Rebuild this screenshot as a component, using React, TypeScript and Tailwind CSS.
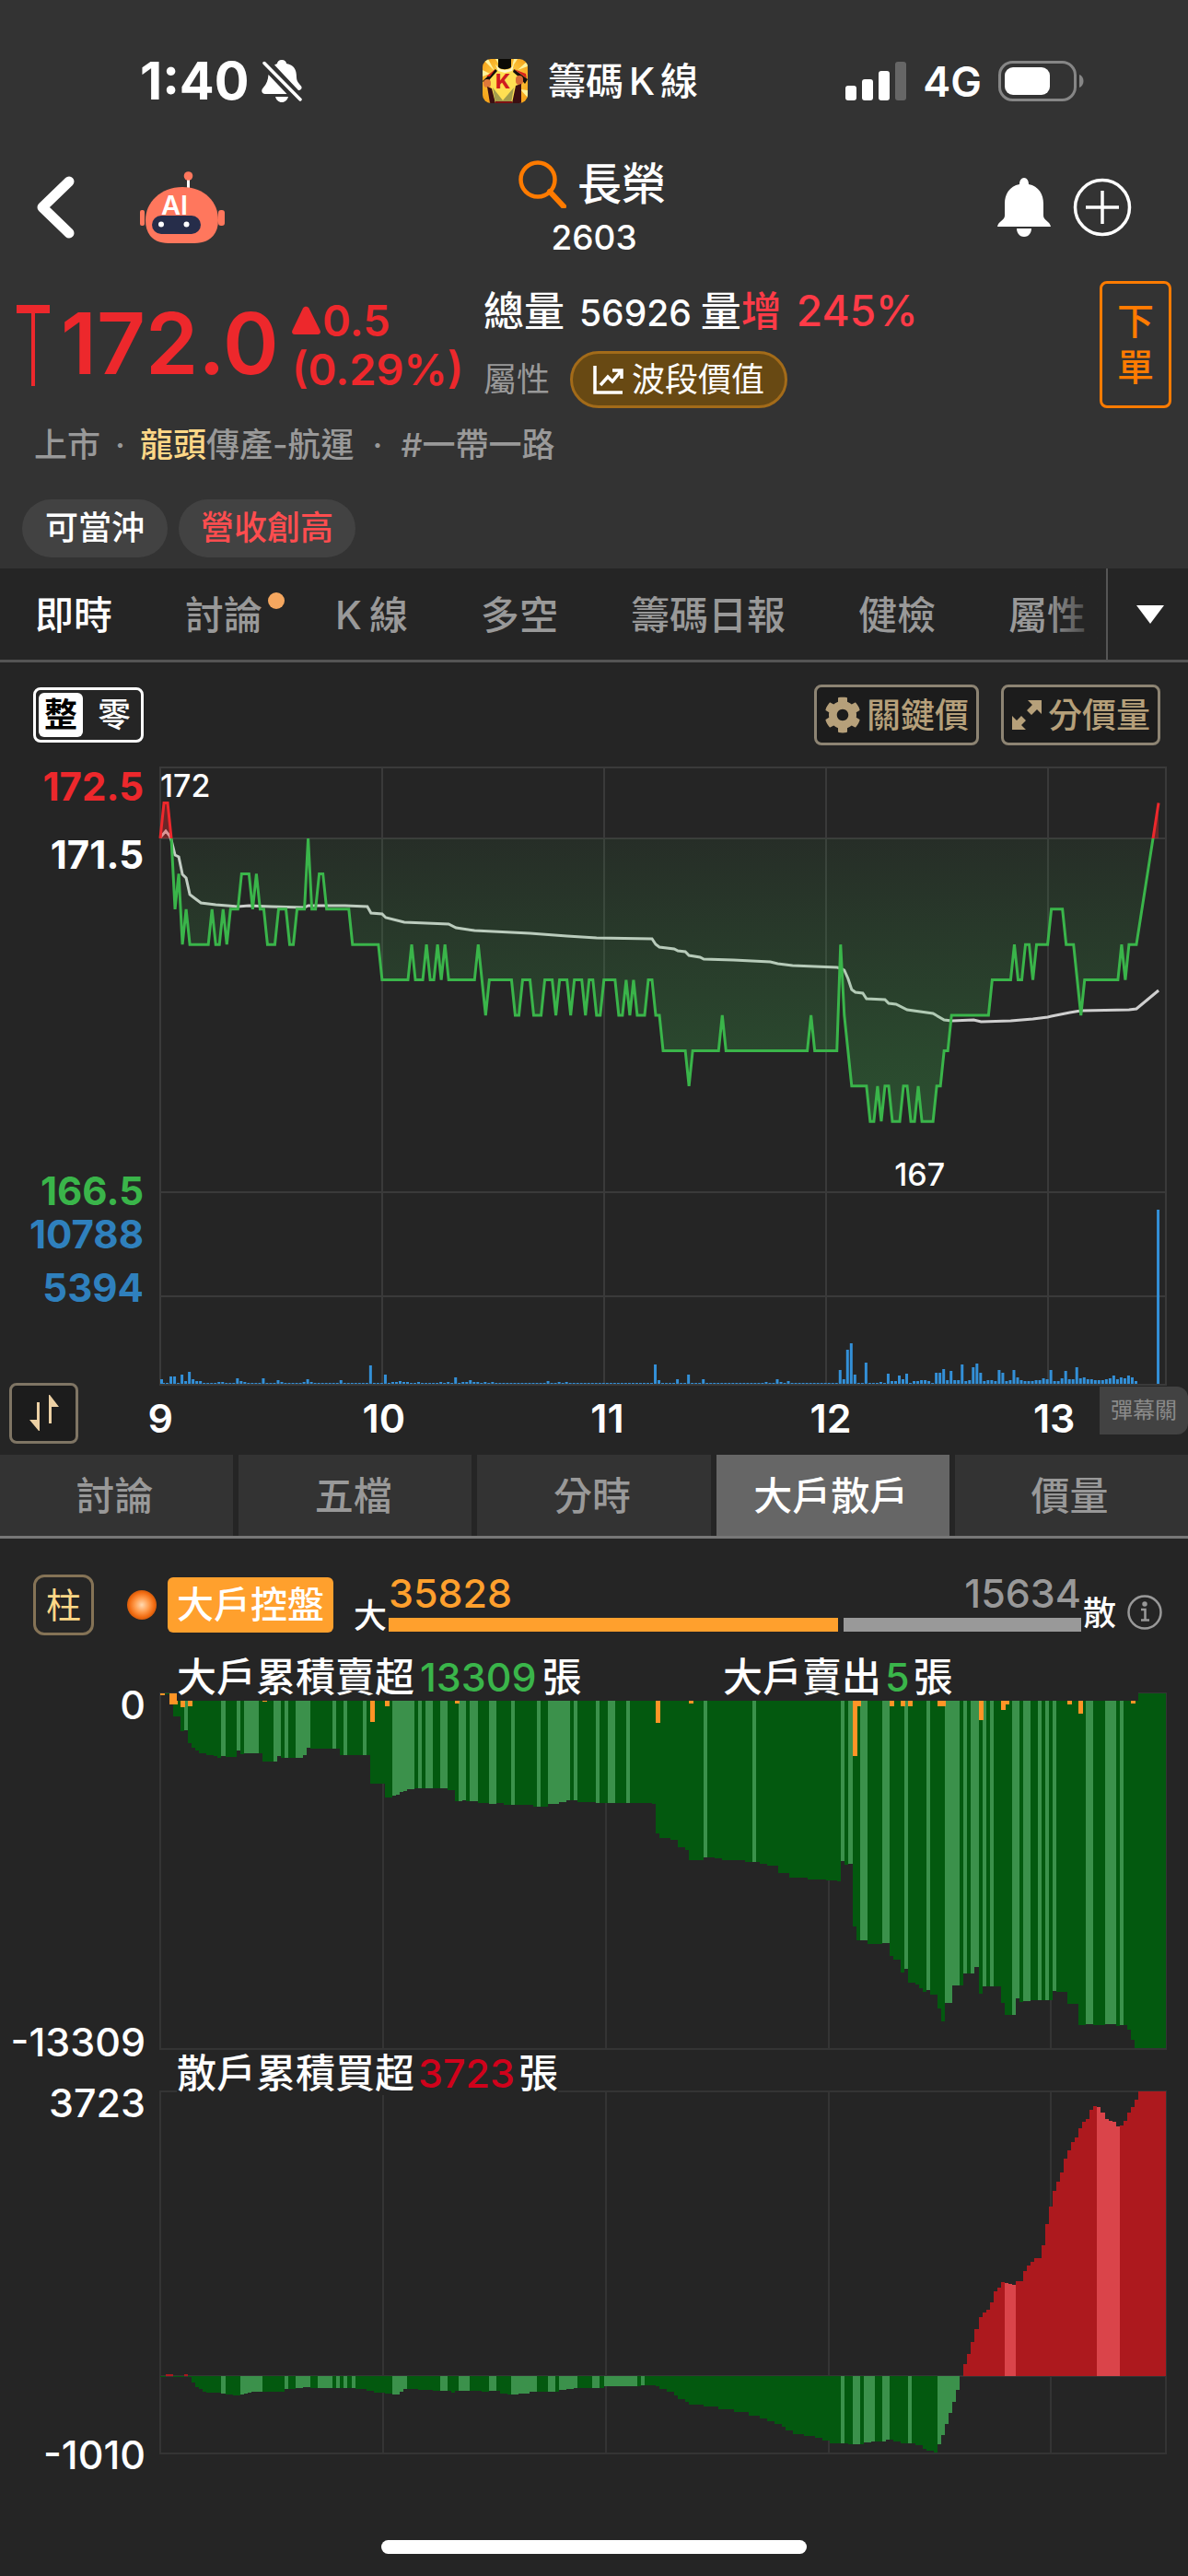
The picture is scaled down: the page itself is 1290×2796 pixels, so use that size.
import clsx from "clsx";
import { FaCog } from "react-icons/fa";

type Point = [number, number];

const FONT = "font-[Inter,'Noto_Sans_CJK_TC','Noto_Sans',sans-serif]";

/* ---------- intraday data: [minute, value] ---------- */

// price in half-dollar ticks below the 171.5 reference
const PRICE: Point[] = [
  [0, 0], [1, -1], [2, -1], [3, 0], [4, 2], [5, 1], [6, 3], [7, 2], [8, 3], [13, 3], [14, 2], [15, 3], [16, 3],
  [17, 2], [18, 3], [19, 2], [21, 2], [22, 1], [24, 1], [25, 2], [26, 1], [27, 2], [28, 2], [29, 3], [31, 3],
  [32, 2], [34, 2], [35, 3], [36, 3], [37, 2], [39, 2], [40, 0], [41, 2], [42, 2], [43, 1], [44, 1], [45, 2],
  [51, 2], [52, 3], [59, 3], [60, 4], [67, 4], [68, 3], [69, 4], [71, 4], [72, 3], [73, 4], [74, 4], [75, 3],
  [76, 4], [77, 3], [78, 4], [85, 4], [86, 3], [88, 5], [89, 4], [95, 4], [96, 5], [97, 5], [98, 4], [100, 4],
  [101, 5], [103, 5], [104, 4], [106, 4], [107, 5], [108, 4], [110, 4], [111, 5], [112, 4], [114, 4], [115, 5],
  [116, 4], [117, 4], [118, 5], [119, 5], [120, 4], [123, 4], [124, 5], [125, 5], [126, 4], [127, 5], [128, 4],
  [129, 5], [131, 5], [132, 4], [133, 4], [134, 5], [135, 5], [136, 6], [142, 6], [143, 7], [144, 6], [151, 6],
  [152, 5], [153, 6], [175, 6], [176, 5], [177, 6], [183, 6], [184, 3], [185, 5], [187, 7], [191, 7], [192, 8],
  [193, 8], [194, 7], [195, 8], [196, 7], [197, 7], [198, 8], [200, 8], [201, 7], [202, 7], [203, 8], [204, 8],
  [205, 7], [206, 8], [209, 8], [210, 7], [211, 7], [212, 6], [213, 6], [214, 5], [224, 5], [225, 4], [230, 4],
  [231, 3], [232, 4], [233, 4], [234, 3], [235, 3], [236, 4], [237, 3], [240, 3], [241, 2], [244, 2], [245, 3],
  [247, 3], [249, 5], [250, 4], [259, 4], [260, 3], [261, 4], [262, 3], [264, 3], [270, -1],
];

const AVERAGE: Point[] = [
  [0, 76], [1.5, 69], [2.5, 74], [3, 79], [4, 95], [5, 97], [6, 116], [7, 120], [8, 138], [9, 141], [11, 147],
  [15, 149], [21, 151], [24, 150], [30, 151], [39, 152], [40, 150], [50, 150], [56, 151], [57, 158], [60, 159],
  [61, 163], [66, 168], [78, 170], [80, 174], [85, 177], [100, 180], [110, 183], [118, 185], [133, 186],
  [134, 192], [135, 195], [139, 197], [140, 199], [142, 200], [143, 204], [146, 206], [147, 208], [155, 209],
  [165, 211], [167, 213], [171, 215], [183, 217], [184, 218], [185, 220], [186, 229], [187, 241], [188, 244],
  [190, 245], [191, 251], [196, 252], [197, 256], [199, 257], [202, 263], [209, 267], [212, 274], [214, 275],
  [220, 274], [222, 276], [230, 275], [236, 273], [240, 271], [241, 270], [246, 266], [249, 264], [262, 263],
  [264, 262], [270, 242],
];

const VOLUME: Point[] = [
  [0, 5], [3, 8], [4, 8], [6, 10], [7, 3], [8, 13], [9, 5], [10, 3], [11, 3], [16, 2], [17, 2], [21, 6], [22, 3],
  [23, 2], [28, 6], [32, 4], [33, 2], [39, 2], [40, 5], [41, 2], [49, 4], [57, 20], [61, 10], [63, 2], [64, 2],
  [65, 3], [66, 2], [67, 2], [70, 2], [76, 2], [78, 2], [80, 7], [82, 2], [83, 2], [84, 4], [85, 2], [86, 2],
  [88, 2], [90, 2], [105, 3], [108, 2], [110, 2], [134, 21], [135, 4], [140, 5], [143, 10], [147, 5], [164, 2],
  [167, 5], [168, 2], [170, 3], [184, 15], [185, 5], [186, 37], [187, 44], [188, 10], [191, 23], [195, 2],
  [197, 11], [198, 3], [199, 3], [200, 9], [201, 5], [202, 11], [204, 3], [205, 3], [206, 4], [207, 4], [208, 3],
  [210, 12], [211, 12], [212, 16], [213, 4], [214, 14], [215, 4], [216, 4], [217, 21], [218, 3], [219, 4],
  [220, 18], [221, 22], [222, 12], [223, 3], [224, 4], [225, 4], [226, 3], [227, 15], [228, 12], [229, 3],
  [230, 4], [231, 15], [232, 7], [233, 4], [234, 3], [235, 3], [236, 3], [237, 4], [238, 4], [239, 6], [240, 5],
  [241, 15], [242, 3], [243, 3], [244, 6], [245, 14], [246, 5], [247, 5], [248, 18], [249, 6], [250, 7],
  [251, 5], [252, 5], [253, 4], [254, 4], [255, 4], [256, 5], [257, 6], [258, 9], [259, 5], [260, 7], [261, 6],
  [262, 9], [263, 7], [264, 3], [270, 189],
];

// a value holds until the next entry
const BIG: Point[] = [
  [0, 1], [4, 25], [6, 41], [7, 40], [8, 54], [9, 59], [10, 62], [11, 65], [13, 67], [15, 68], [16, 70], [17, 68],
  [18, 69], [21, 62], [22, 66], [23, 65], [28, 74], [32, 68], [33, 70], [39, 67], [40, 59], [41, 60], [49, 67],
  [57, 98], [61, 113], [63, 111], [64, 110], [65, 107], [66, 106], [67, 104], [69, 103], [78, 105], [80, 117],
  [82, 116], [83, 117], [86, 119], [89, 120], [91, 119], [93, 121], [101, 123], [105, 120], [108, 118],
  [110, 116], [113, 118], [118, 119], [133, 120], [134, 152], [135, 157], [138, 159], [140, 167], [142, 170],
  [143, 181], [147, 178], [150, 179], [152, 181], [158, 183], [162, 185], [164, 187], [167, 195], [170, 200],
  [175, 202], [180, 203], [183, 204], [184, 182], [185, 186], [186, 185], [187, 253], [188, 268], [191, 272],
  [195, 271], [197, 285], [198, 289], [200, 303], [201, 299], [202, 314], [204, 316], [205, 320], [206, 324],
  [207, 322], [208, 327], [210, 342], [211, 356], [212, 336], [214, 317], [217, 304], [220, 297], [221, 326],
  [222, 318], [227, 336], [228, 349], [231, 331], [232, 335], [233, 334], [235, 333], [241, 323], [242, 324],
  [245, 337], [248, 360], [250, 359], [252, 360], [255, 359], [258, 361], [259, 360], [261, 365], [262, 376],
  [263, 385],
];

const BIG_LIGHT: Point[] = [
  [7, 7], [17, 17], [21, 21], [23, 26], [31, 32], [34, 34], [37, 40], [47, 47], [50, 50], [55, 55], [63, 68],
  [70, 70], [72, 73], [76, 77], [81, 82], [84, 85], [89, 90], [95, 95], [102, 102], [105, 110], [112, 112],
  [118, 118], [121, 122], [126, 126], [147, 147], [160, 160], [184, 184], [186, 186], [189, 190], [195, 196],
  [201, 201], [207, 207], [212, 215], [217, 217], [219, 220], [222, 222], [224, 224], [230, 231], [233, 234],
  [237, 237], [239, 239], [241, 241], [250, 251], [255, 257], [259, 259],
];

const BIG_TRADES: Point[] = [
  [0, 2], [3, 12], [4, 12], [6, 15], [8, 14], [28, 9], [57, 31], [61, 14], [80, 11], [134, 32], [143, 11],
  [187, 68], [188, 14], [197, 14], [200, 14], [202, 14], [210, 14], [211, 14], [221, 29], [227, 18], [228, 12],
  [245, 12], [248, 22], [262, 11],
];

// negative = net buy, drawn above the zero line
const SMALL: Point[] = [
  [0, 1], [2, -2], [4, 1], [7, -2], [8, 1], [9, 7], [10, 12], [11, 14], [12, 17], [13, 18], [17, 19], [18, 20],
  [20, 21], [22, 20], [23, 19], [24, 18], [25, 17], [34, 14], [37, 13], [39, 12], [41, 13], [53, 14], [56, 16],
  [58, 18], [61, 19], [63, 20], [65, 17], [66, 14], [70, 15], [74, 16], [79, 18], [80, 16], [87, 17], [89, 16],
  [92, 19], [94, 20], [97, 19], [100, 17], [108, 15], [110, 14], [112, 13], [120, 11], [130, 10], [134, 11],
  [135, 14], [137, 17], [139, 21], [140, 25], [142, 28], [143, 31], [147, 33], [151, 36], [155, 39], [159, 43],
  [162, 46], [164, 49], [166, 52], [168, 55], [169, 59], [171, 63], [174, 65], [177, 67], [179, 70], [181, 73],
  [186, 74], [190, 72], [192, 71], [196, 69], [198, 71], [200, 73], [204, 75], [206, 79], [207, 81], [209, 83],
  [210, 74], [211, 64], [212, 52], [213, 40], [214, 28], [215, 15], [216, 0], [217, -13], [218, -24],
  [219, -37], [220, -51], [221, -64], [222, -69], [223, -72], [224, -80], [225, -92], [226, -96], [227, -102],
  [228, -101], [229, -100], [230, -99], [231, -103], [233, -114], [234, -120], [235, -124], [236, -128],
  [238, -142], [239, -165], [240, -184], [241, -201], [242, -211], [243, -221], [244, -236], [245, -245],
  [246, -254], [247, -259], [248, -269], [249, -276], [250, -279], [251, -289], [252, -293], [253, -292],
  [254, -286], [255, -279], [256, -277], [257, -276], [258, -271], [259, -272], [260, -277], [261, -286],
  [262, -292], [263, -300], [264, -309],
];

const SMALL_LIGHT: Point[] = [
  [17, 17], [22, 27], [34, 34], [37, 40], [43, 46], [48, 48], [50, 50], [52, 52], [63, 66], [76, 77], [81, 83],
  [89, 90], [95, 101], [105, 106], [108, 112], [117, 118], [120, 128], [130, 130], [184, 184], [187, 188],
  [190, 192], [195, 196], [202, 202], [210, 215], [228, 230], [253, 258],
];

const BARS = 272;
const STEP = 1092 / 271;

function expand(points: Point[]) {
  const out: number[] = [];
  let k = 0;
  for (let i = 0; i < BARS; i++) {
    while (k + 1 < points.length && points[k + 1][0] <= i) k++;
    out.push(points[k][1]);
  }
  return out;
}

const inRanges = (ranges: Point[], i: number) => ranges.some(([a, b]) => i >= a && i <= b);

function barX(i: number) {
  const x1 = Math.max(0, (i - 0.5) * STEP);
  const x2 = Math.min(1092, (i + 0.5) * STEP);
  return { x: x1, width: x2 - x1 };
}

/* ---------- charts ---------- */

function PriceChart() {
  const x = (m: number) => m * 4.015;
  const line = PRICE.map(([m, v]) => `${x(m)},${77 + v * 38.4}`).join(" ");
  const area = `0,77 ${line} ${x(270)},77`;
  const volume = new Map(VOLUME);
  return (
    <svg className="block h-[671px] w-full overflow-visible" viewBox="0 0 1092 671" preserveAspectRatio="none">
      <defs>
        <linearGradient id="down" x1="0" y1="77" x2="0" y2="385" gradientUnits="userSpaceOnUse">
          <stop offset="0" stopColor="#3ab54a" stopOpacity="0.06" />
          <stop offset="1" stopColor="#3ab54a" stopOpacity="0.3" />
        </linearGradient>
        <clipPath id="above">
          <rect x="-4" y="0" width="1100" height="77" />
        </clipPath>
        <clipPath id="below">
          <rect x="-4" y="77" width="1100" height="400" />
        </clipPath>
      </defs>
      <g stroke="#3a3a3a" strokeWidth="2" fill="none">
        <path d="M0 0H1092V670H0Z" />
        <path d="M0 77H1092M0 461H1092M0 574H1092" />
        <path d="M241 0V670M482 0V670M723 0V670M964 0V670" />
      </g>
      <polyline points={AVERAGE.map(([m, v]) => `${x(m)},${v}`).join(" ")} fill="none" stroke="#cfcfcf" strokeWidth="3" />
      <g clipPath="url(#below)">
        <polygon points={area} fill="url(#down)" />
        <polyline points={line} fill="none" stroke="#3ab54a" strokeWidth="3" />
      </g>
      <g clipPath="url(#above)">
        <polygon points={area} fill="#ed282c" fillOpacity="0.35" />
        <polyline points={line} fill="none" stroke="#ed282c" strokeWidth="3" />
      </g>
      {Array.from({ length: 271 }, (_, m) => {
        if (m > 264 && m < 270) return null;
        const h = volume.get(m) ?? 1;
        return <rect key={m} x={x(m) - (m ? 2 : 0)} y={669 - h} width="3" height={h} fill="#3390d8" />;
      })}
    </svg>
  );
}

function BigChart() {
  return (
    <svg className="block h-[386px] w-full overflow-visible" viewBox="0 0 1092 386" preserveAspectRatio="none">
      <path d="M0 0H1092V386H0ZM242 0V386M484 0V386M726 0V386M967 0V386" stroke="#343434" strokeWidth="2" fill="none" />
      <g shapeRendering="crispEdges">
        {expand(BIG).map((h, i) => (
          <rect key={i} {...barX(i)} y="0" height={h} fill={inRanges(BIG_LIGHT, i) ? "#3b914b" : "#03590f"} />
        ))}
        {BIG_TRADES.map(([i, h]) => (
          <rect key={i} x={Math.max(0, i * STEP - 2)} y="0" width="5" height={h} fill="#ff9426" />
        ))}
      </g>
    </svg>
  );
}

function SmallChart() {
  return (
    <svg className="block h-[393px] w-full overflow-visible" viewBox="0 0 1092 393" preserveAspectRatio="none">
      <path
        d="M0 0H1092V393H0ZM0 309H1092M242 0V393M484 0V393M726 0V393M967 0V393"
        stroke="#343434"
        strokeWidth="2"
        fill="none"
      />
      <g shapeRendering="crispEdges">
        {expand(SMALL).map((h, i) => {
          const light = inRanges(SMALL_LIGHT, i);
          const fill = h < 0 ? (light ? "#da444a" : "#ad191e") : light ? "#3b914b" : "#03590f";
          return <rect key={i} {...barX(i)} y={h < 0 ? 309 + h : 309} height={Math.abs(h)} fill={fill} />;
        })}
      </g>
    </svg>
  );
}

/* ---------- icons ---------- */

function MutedBell() {
  return (
    <svg width="44" height="46" viewBox="0 0 44 46" fill="#fff">
      <path d="M22 0c-3 0-5 2-5 4-1 .4-2 1-3 1.600L40 33c2 0 4-1.500 3.500-3.500C43 27 38 25 38 19 38 10 35 5.500 27 4c0-2-2-4-5-4Z" />
      <path d="M7.500 16C7 22 5.500 26 2 30c-3 3-2 7 2 7h23.500Z" />
      <path d="M15 40h14c-1 3.500-3.500 6-7 6s-6-2.500-7-6Z" />
      <path d="M3 3.500 42 43" stroke="#fff" strokeWidth="3.500" strokeLinecap="round" />
    </svg>
  );
}

function AppIcon() {
  return (
    <svg width="49" height="48" viewBox="0 0 49 48">
      <defs>
        <clipPath id="app">
          <rect width="49" height="48" rx="9" />
        </clipPath>
        <radialGradient id="glow" cx="50%" cy="45%" r="60%">
          <stop offset="0" stopColor="#ffe45a" />
          <stop offset="1" stopColor="#f7a51c" />
        </radialGradient>
      </defs>
      <g clipPath="url(#app)">
        <rect width="49" height="48" fill="url(#glow)" />
        <path d="M0 0h6l7 13ZM14 0h3l2 8ZM34 0h4l-6 9ZM49 2v6L38 12ZM0 12v7l8-3ZM49 34v8l-8-9Z" fill="#fff29a" />
        <path d="M8 18 16 10 24 14 33 10 42 18 40 40 34 48H14L9 40Z" fill="#ffdf52" />
        <path d="M17 0h14v9c-4 3-10 3-14 0Z" fill="#0b0a06" />
        <path d="M14 6 19 11 24 12 30 11 34 6 32 13 24 15 17 13Z" fill="#fff7c8" />
        <path d="M0 24 14 11 16 13 8 22 4 28ZM49 22 34 11 33 14 41 21 46 27Z" fill="#15100c" />
        <path d="M4 19 14 11 8 19ZM34 11 47 16 48 21Z" fill="#d8251d" />
        <rect x="1" y="22" width="8" height="9" rx="4" fill="#e0793a" />
        <rect x="36" y="18" width="8" height="10" rx="4" fill="#d86b35" />
        <path d="M5 30 10 32 14 48H8ZM42 27 36 29 32 48H42Z" fill="#3b0f12" />
        <path d="M11 31 22 45 34 31 31 48H14Z" fill="#a39d4c" />
        <path d="M14 46h18v2H14Z" fill="#7b1013" />
        <text x="14" y="32" fontSize="22" fontWeight="800" fill="#cf1b1f" fontFamily="Inter, sans-serif">
          K
        </text>
      </g>
    </svg>
  );
}

function Signal() {
  return (
    <svg width="66" height="42" viewBox="0 0 66 42" fill="#fff">
      <rect x="0" y="26" width="12" height="16" rx="3" />
      <rect x="18" y="19" width="12" height="23" rx="3" />
      <rect x="36" y="10" width="12" height="32" rx="3" />
      <rect x="54" y="0" width="12" height="42" rx="3" fill="#666" />
    </svg>
  );
}

function Battery() {
  return (
    <svg width="94" height="44" viewBox="0 0 94 44">
      <rect x="1.500" y="1.500" width="82" height="41" rx="14" fill="none" stroke="#868686" strokeWidth="3" />
      <rect x="7" y="7" width="49" height="30" rx="9" fill="#fff" />
      <path d="M88 15c6 2 6 12 0 14Z" fill="#868686" />
    </svg>
  );
}

function Robot() {
  return (
    <svg width="92" height="78" viewBox="0 0 92 78">
      <path d="M52.500 6v14" stroke="#fff" strokeWidth="3" />
      <circle cx="52.500" cy="5" r="4.800" fill="#ff775d" />
      <rect x="0" y="42" width="5" height="17" rx="2" fill="#ff775d" />
      <rect x="85" y="42" width="7" height="17" rx="3" fill="#ff775d" />
      <path d="M46 17c25 0 39 17 39 36 0 16-10 25-26 25H31C15 78 6 69 6 53 6 34 22 17 46 17Z" fill="#ff775d" />
      <text x="23" y="47" fontSize="29" fontWeight="600" fill="#fff" fontFamily="Inter, sans-serif">
        AI
      </text>
      <rect x="13" y="48" width="53" height="20" rx="10" fill="#262d4a" />
      <circle cx="23" cy="57.500" r="3" fill="#fff" />
      <circle cx="50.500" cy="57.500" r="3" fill="#fff" />
    </svg>
  );
}

function Bell() {
  return (
    <svg width="58" height="64" viewBox="0 0 58 64" fill="#fff">
      <path d="M29 0c-3 0-5 3-5 7C13 9 8 18 8 28v13c0 5-7 6-8 12h58c-1-6-8-7-8-12V28C50 18 45 9 34 7c0-4-2-7-5-7Z" />
      <path d="M21 55h16c0 5-3 9-8 9s-8-4-8-9Z" />
    </svg>
  );
}

function Expand() {
  return (
    <svg width="34" height="34" viewBox="0 0 34 34" fill="#b6a07a">
      <path d="M18 1h15v15l-5-5-6 6-5-5 6-6ZM1 18l5 5 5-5 5 5-5 5 5 5H1Z" />
    </svg>
  );
}

function SwapArrows() {
  return (
    <svg width="34" height="40" viewBox="0 0 34 40" fill="#ecd0a4">
      <path d="M9 8h3v31h-1L1 27h8ZM22 0h1l10 13h-8v18h-3Z" />
    </svg>
  );
}

/* ---------- page ---------- */

function StatusBar() {
  return (
    <div className="grid h-[160px] grid-cols-3 items-center pt-4">
      <div className="flex items-center gap-3.5 pl-[152px]">
        <span className="text-[56px] font-bold leading-none">1:40</span>
        <MutedBell />
      </div>
      <div className="flex items-center justify-center gap-[22px] pr-2 text-[41px] font-medium leading-none">
        <AppIcon />
        <span>
          籌碼<span className="mx-1.5">K</span>線
        </span>
      </div>
      <div className="flex items-center justify-end gap-[18px] pr-28">
        <Signal />
        <span className="text-[45px] font-semibold leading-none">4G</span>
        <Battery />
      </div>
    </div>
  );
}

function NavBar() {
  return (
    <div className="grid h-[130px] grid-cols-3 items-center">
      <div className="flex items-center gap-[70px] pl-[38px]">
        <button type="button" aria-label="返回">
          <svg width="44" height="68" viewBox="0 0 44 68" fill="none">
            <path d="M37 6 8 34l29 28" stroke="#fff" strokeWidth="11" strokeLinecap="round" strokeLinejoin="round" />
          </svg>
        </button>
        <button type="button" aria-label="AI">
          <Robot />
        </button>
      </div>
      <div className="flex flex-col items-center pt-1.5">
        <button type="button" className="flex items-center gap-3 pr-1 text-[48px] font-medium leading-[60px]">
          <svg width="52" height="52" viewBox="0 0 52 52" fill="none" stroke="#ff7b00">
            <circle cx="21" cy="21" r="18.500" strokeWidth="4.500" />
            <path d="m34 34 15 16" strokeWidth="6" strokeLinecap="round" />
          </svg>
          長榮
        </button>
        <p className="text-[37px] font-medium leading-[56px]">2603</p>
      </div>
      <div className="flex items-center justify-end gap-6 pr-[61px]">
        <button type="button" aria-label="通知">
          <Bell />
        </button>
        <button type="button" aria-label="加入自選">
          <svg width="64" height="64" viewBox="0 0 64 64" fill="none" stroke="#fff" strokeWidth="3.500">
            <circle cx="32" cy="32" r="29.500" />
            <path d="M32 14v36M14 32h36" />
          </svg>
        </button>
      </div>
    </div>
  );
}

function Quote() {
  return (
    <section className="flex h-[138px] px-[18px]">
      <svg className="mt-[26px]" width="36" height="88" viewBox="0 0 36 88" fill="#ed282c">
        <path d="M0 0h36v9H20v79h-4V9H0Z" />
      </svg>
      <p className="ml-3 w-[251px] text-[92px] font-semibold leading-[136px] text-[#ed282c]">172.0</p>
      <div className="w-[208px] whitespace-nowrap pt-4 text-[47px] font-semibold leading-[53px] text-[#ed282c]">
        <p className="flex items-center gap-0.5">
          <svg width="31" height="31" viewBox="0 0 31 31" fill="#ed282c">
            <path d="M12 2.500C13.500 0 17 0 18.500 2.500l12 24c1 2.500 0 4.500-2.500 4.500H3C.5 31-.5 29 .5 26.500Z" />
          </svg>
          0.5
        </p>
        <p>(0.29%)</p>
      </div>
      <div className="flex grow flex-col justify-between">
        <p className="flex items-baseline text-[44px] font-medium leading-[64px]">
          總量<span className="ml-4 mr-2.5 text-[39px]">56926</span>量
          <span className="text-[#ff3b47]">增</span>
          <span className="ml-4 text-[46px] text-[#ff3b47]">245%</span>
        </p>
        <div className="flex items-center gap-[22px] text-[36px]">
          <span className="text-[#999]">屬性</span>
          <button
            type="button"
            className="flex h-[62px] items-center gap-2 rounded-full border-3 border-[#a36b19] bg-[#684913] px-[22px] leading-none"
          >
            <svg width="34" height="32" viewBox="0 0 34 32" fill="none" stroke="#fff" strokeWidth="3.500">
              <path d="M2 1v29h30M8 22l8-9 5 5 9-11M21 6h10v9" />
            </svg>
            波段價值
          </button>
        </div>
      </div>
      <button
        type="button"
        className="flex w-[78px] flex-col items-center justify-center rounded-lg border-3 border-[#ff7b00] text-[40px] font-medium leading-[50px] text-[#ff7b00]"
      >
        <span>下</span>
        <span>單</span>
      </button>
    </section>
  );
}

const TABS = ["即時", "討論", "K線", "多空", "籌碼日報", "健檢", "屬性"];

function MainTabs() {
  return (
    <nav className="flex h-[102px] border-b-3 border-[#555] text-[42px] font-medium text-[#999]">
      <div className="relative flex grow items-center gap-[79px] overflow-hidden whitespace-nowrap pl-[38px] pt-0.5">
        {TABS.map((tab, i) => (
          <button key={tab} type="button" className={clsx("relative shrink-0 leading-none", i === 0 && "text-white")}>
            {tab === "K線" ? (
              <>
                <span className="mr-2">K</span>線
              </>
            ) : (
              tab
            )}
            {tab === "討論" && <i className="absolute -right-6 -top-1 size-[18px] rounded-full bg-[#f5a75f]" />}
          </button>
        ))}
        <div className="absolute inset-y-0 right-0 w-16 bg-gradient-to-r from-transparent to-[#252525]" />
      </div>
      <button type="button" aria-label="更多" className="flex w-[89px] items-center justify-center border-l-2 border-[#555] pl-1">
        <svg width="30" height="20" viewBox="0 0 30 20" fill="#fff">
          <path d="M0 0h30L15 20Z" />
        </svg>
      </button>
    </nav>
  );
}

const outlined =
  "flex h-[66px] items-center gap-1.5 rounded-lg border-3 border-[#8d8473] bg-[#1c1c1c] px-2 text-[37px] font-medium leading-none text-[#b6a07a]";

function Toolbar() {
  return (
    <div className="flex items-center justify-between pl-9 pr-[30px] pt-6">
      <div className="flex h-[60px] w-[120px] items-center rounded-lg border-3 border-white p-[3px] text-[36px] font-bold leading-none">
        <button type="button" className="size-12 rounded-md bg-white text-black">整</button>
        <button type="button" className="grow pl-2 font-medium">零</button>
      </div>
      <div className="flex gap-6">
        <button type="button" className={outlined}>
          <FaCog className="size-10" />
          關鍵價
        </button>
        <button type="button" className={outlined}>
          <Expand />
          分價量
        </button>
      </div>
    </div>
  );
}

function Realtime() {
  return (
    <section className="relative pt-6">
      <div className="flex pr-6">
        <div className="flex w-[174px] shrink-0 flex-col pr-[18px] text-right text-[42px] font-bold leading-[42px]">
          <span className="text-[#ed282c]">172.5</span>
          <span className="mt-8">171.5</span>
          <span className="mt-[323px] text-[#3ab54a]">166.5</span>
          <span className="mt-[5px] text-[#2f80bd]">10788</span>
          <span className="mt-4 text-[#2f80bd]">5394</span>
        </div>
        <div className="relative grow">
          <PriceChart />
          <span className="absolute left-0 top-1 text-[34px] font-medium leading-8">172</span>
          <span className="absolute left-[73%] top-[426px] text-[34px] font-medium leading-8">167</span>
        </div>
      </div>
      <div className="ml-[53px] mr-6 grid h-[75px] grid-cols-5 items-center pb-1 text-center text-[43px] font-semibold leading-none">
        {[9, 10, 11, 12, 13].map((h) => (
          <span key={h}>{h}</span>
        ))}
      </div>
      <button
        type="button"
        aria-label="切換"
        className="absolute bottom-3 left-2.5 flex h-[66px] w-[75px] items-center justify-center rounded-lg border-3 border-[#7f7564] bg-[#1c1c1c]"
      >
        <SwapArrows />
      </button>
      <button
        type="button"
        className="absolute bottom-[22px] right-0 h-[52px] w-24 rounded-r-xl bg-[#424242] text-[24px] leading-none text-[#8a8a8a]"
      >
        彈幕關
      </button>
    </section>
  );
}

function SubTabs() {
  return (
    <div className="grid h-[91px] grid-cols-5 gap-1.5 border-b-3 border-[#777] text-[42px] font-medium text-[#999]">
      {["討論", "五檔", "分時", "大戶散戶", "價量"].map((tab) => (
        <button key={tab} type="button" className={clsx("pr-1", tab === "大戶散戶" ? "bg-[#666] text-white" : "bg-[#333]")}>
          {tab}
        </button>
      ))}
    </div>
  );
}

function ControlRow() {
  return (
    <div className="flex h-[66px] items-center pl-9 pr-7">
      <button
        type="button"
        className="size-[66px] shrink-0 rounded-xl border-3 border-[#857356] text-[38px] leading-none text-[#ffd887]"
      >
        柱
      </button>
      <i className="ml-9 size-8 shrink-0 rounded-full bg-[radial-gradient(circle,#ffd9b0_0%,#ff9a4a_35%,#f06a10_60%,#7a3005_100%)]" />
      <span className="ml-3 flex h-[60px] shrink-0 items-center rounded-md bg-[#ffa02d] px-2.5 text-[40px] font-medium leading-none">
        大戶控盤
      </span>
      <span className="ml-[22px] shrink-0 self-end text-[36px] font-medium leading-[42px]">大</span>
      <div className="mx-0.5 grow pb-1.5 text-[43px] font-medium leading-[42px]">
        <div className="flex justify-between">
          <span className="text-[#ffa02d]">35828</span>
          <span className="text-[#999]">15634</span>
        </div>
        <div className="mt-1.5 flex h-[15px] gap-1.5">
          <div className="grow-[487] bg-[#ffa02d]" />
          <div className="grow-[257] bg-[#999]" />
        </div>
      </div>
      <span className="shrink-0 self-end text-[36px] font-medium leading-[48px]">散</span>
      <button type="button" aria-label="說明" className="ml-3 mt-4 shrink-0">
        <svg width="38" height="38" viewBox="0 0 38 38" fill="none" stroke="#999" strokeWidth="2.500">
          <circle cx="19" cy="19" r="17.500" />
          <path d="M15 16h4.500v11M15 27.500h9" />
          <circle cx="19" cy="10" r="1.500" fill="#999" />
        </svg>
      </button>
    </div>
  );
}

function Holders() {
  return (
    <section className="flex pr-6 pt-3.5">
      <div className="flex w-[174px] shrink-0 flex-col pr-4 pt-10 text-right text-[43px] font-medium leading-[42px]">
        <span>0</span>
        <span className="mt-[324px]">-13309</span>
        <span className="mt-6">3723</span>
        <span className="mt-[340px]">-1010</span>
      </div>
      <div className="min-w-0 grow">
        <div className="relative z-10 ml-[18px] mr-[30px] grid h-[57px] grid-cols-[593px_1fr] bg-[#252525] text-[43px] font-medium leading-[62px]">
          <p>
            大戶累積賣超<span className="mx-1.5 text-[#3ab54a]">13309</span>張
          </p>
          <p>
            大戶賣出<span className="mx-1 text-[#3ab54a]">5</span>張
          </p>
        </div>
        <div className="-mt-2">
          <BigChart />
        </div>
        <p className="relative z-10 ml-[18px] mt-0.5 h-12 w-fit bg-[#252525] text-[43px] font-medium leading-[48px]">
          散戶累積買超<span className="mx-1 text-[#d0021b]">3723</span>張
        </p>
        <div className="-mt-1">
          <SmallChart />
        </div>
      </div>
    </section>
  );
}

export default function App() {
  return (
    <div className={clsx("flex min-h-screen flex-col bg-[#252525] text-white", FONT)}>
      <header className="bg-[#333] pb-3">
        <StatusBar />
        <NavBar />
        <div className="h-[15px]" />
        <Quote />
        <p className="mt-4 pl-[37px] text-[36px] font-medium leading-[48px] text-[#999]">
          上市<span className="mx-4">·</span>
          <span className="text-[#ffd887]">龍頭</span>傳產-航運<span className="mx-5">·</span>#一帶一路
        </p>
        <div className="mt-[35px] flex gap-3 pl-6 text-[36px] font-medium leading-[63px]">
          <span className="rounded-full bg-[#424242] px-[25px]">可當沖</span>
          <span className="rounded-full bg-[#424242] px-6 text-[#ff4d4f]">營收創高</span>
        </div>
      </header>
      <MainTabs />
      <Toolbar />
      <Realtime />
      <SubTabs />
      <div className="h-[39px]" />
      <ControlRow />
      <Holders />
      <div className="mx-auto mb-6 mt-auto h-[15px] w-[462px] rounded-full bg-white" />
    </div>
  );
}
